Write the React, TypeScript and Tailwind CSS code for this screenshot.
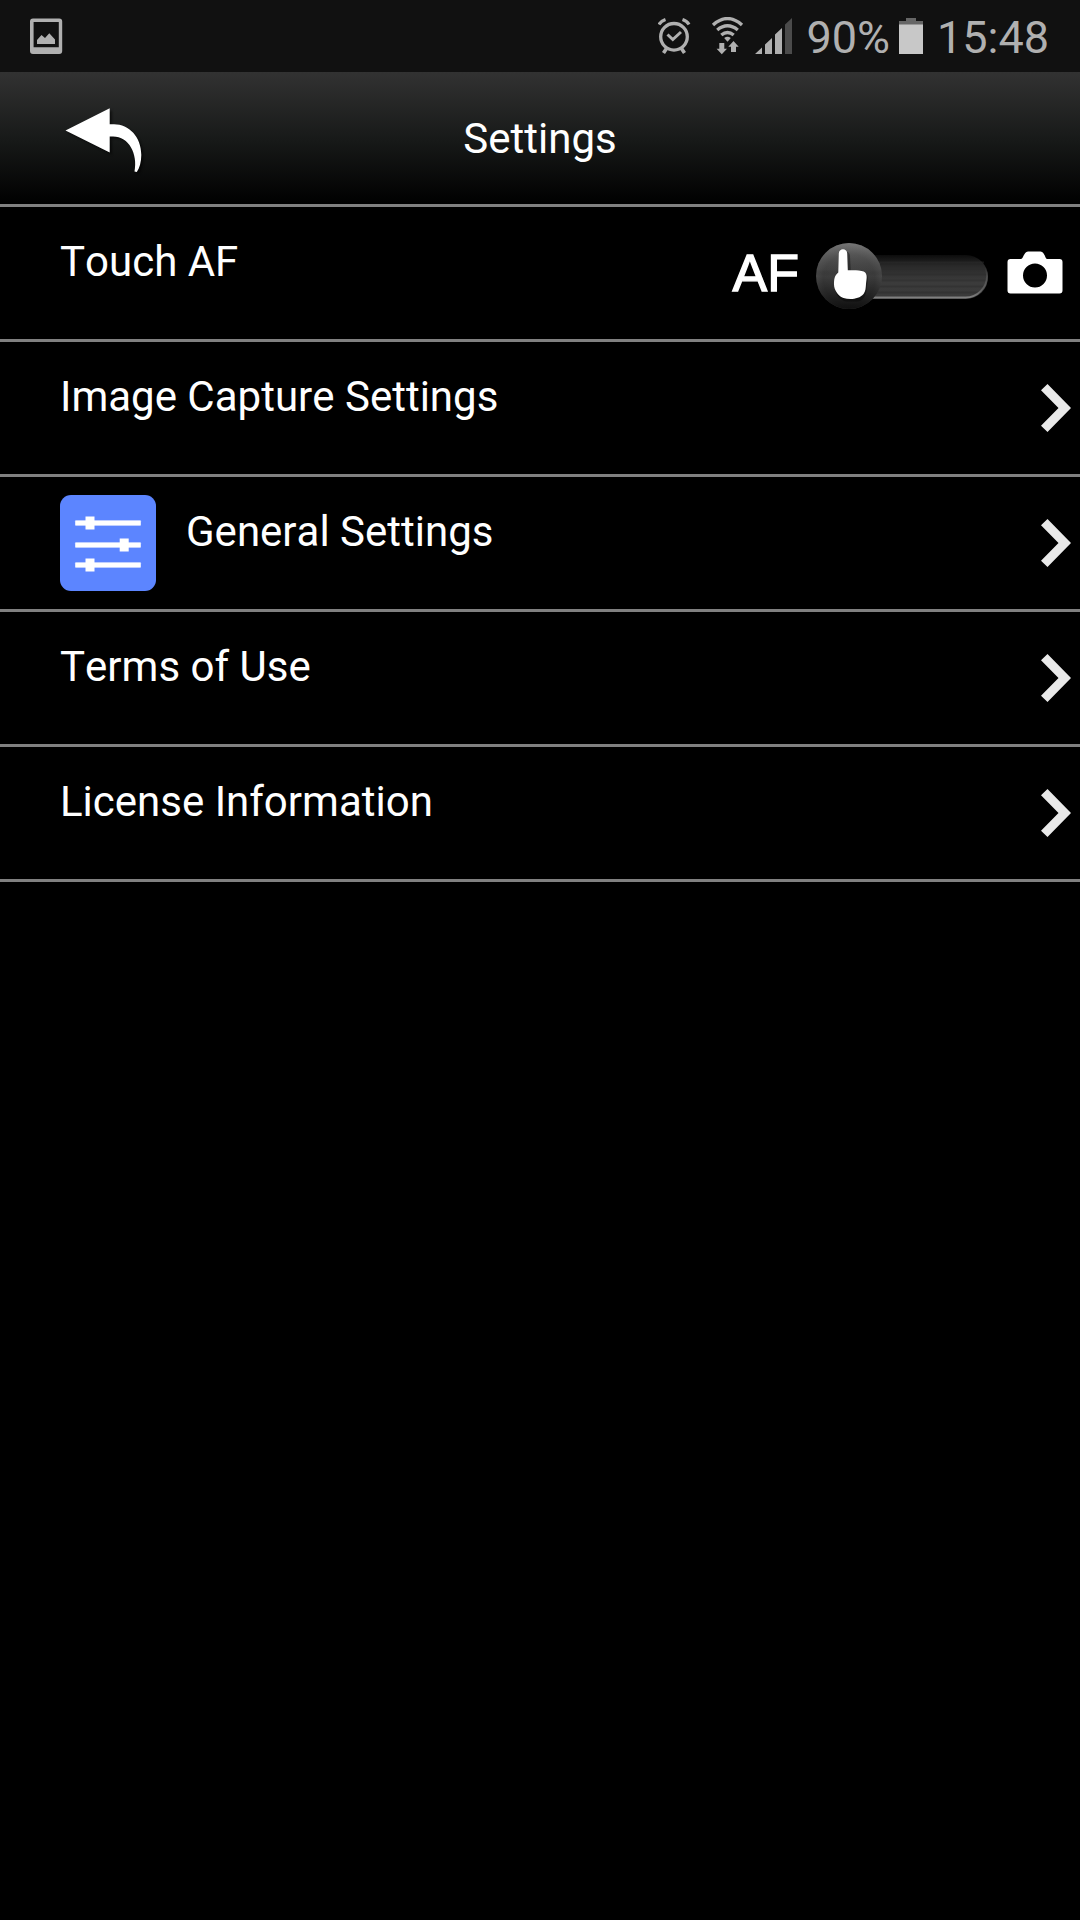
import { useState } from "react";
import type { ReactNode } from "react";

function PictureIcon() {
  return (
    <svg width="33" height="36" viewBox="30 18 33 36" className="block">
      <path
        fill="#b0b0b0"
        fillRule="evenodd"
        d="M33 18.400h26.200a3 3 0 0 1 3 3V51a3 3 0 0 1-3 3H33a3 3 0 0 1-3-3V21.400a3 3 0 0 1 3-3zM33.600 22v25.300h25.200V22z"
      />
      <path fill="#b0b0b0" d="M37 44v-4l4.500-5 3.500 3 4.300-4.800L55 39.500V44z" />
    </svg>
  );
}

function AlarmIcon() {
  return (
    <svg width="33" height="37" viewBox="658 18 33 37" className="block" fill="none" stroke="#b0b0b0">
      <circle cx="674" cy="36.800" r="13.300" strokeWidth="3.300" />
      <path strokeWidth="3" d="M667.500 34.500l5.300 5 8.200-7.500" />
      <path strokeWidth="3.200" d="M659 24.500q2-3.500 6.500-5M689 24.500q-2-3.500-6.500-5" />
      <path strokeWidth="3.600" d="M666.500 48.500l-3 4.500M681.500 48.500l3 4.500" />
    </svg>
  );
}

function WifiIcon() {
  return (
    <svg width="33" height="38" viewBox="711 17 33 38" className="block">
      <g fill="none" stroke="#b0b0b0" strokeWidth="3.400">
        <path d="M713 25q14.500-12.800 29 0" />
        <path d="M717.200 30q10.300-8.400 20.600 0" />
        <path d="M721.300 35q6.200-5 12.400 0" />
      </g>
      <path fill="#b0b0b0" d="M724.200 38q3.300-2.400 6.600 0l-3.300 3.700z" />
      <path fill="#b0b0b0" d="M719.300 43h5v5.700h2.700l-5.200 5.600-5.200-5.600h2.700z" />
      <path fill="#b0b0b0" d="M731 52h5v-5.300h2.700l-5.200-5.700-5.200 5.700h2.700z" />
    </svg>
  );
}

function SignalIcon() {
  return (
    <svg width="38" height="36" viewBox="755 18 38 36" className="block">
      <path fill="#b0b0b0" d="M755 54l7-6.500V54zM765 54v-9.500l7-6.500v16zM775 54V34.500l7-6.500v26z" />
      <path fill="#4b4b4b" d="M785 54V24.500l7-6.500v36z" />
    </svg>
  );
}

function BatteryIcon() {
  return (
    <svg width="24" height="36" viewBox="0 0 24 36" className="block">
      <path fill="#666666" d="M7 0h10v3h7v4H0V3h7z" />
      <path fill="#c8c8c8" d="M0 6.500h24V36H0z" />
    </svg>
  );
}

function BackIcon() {
  return (
    <svg width="80" height="70" viewBox="64 104 80 70" className="block drop-shadow-[2px_2px_1px_rgba(0,0,0,0.6)]">
      <path
        fill="#ffffff"
        d="M65.500 129.500L109.700 107.300V123.300H114C129 123.300 141.300 136 141.300 154C141.300 161 139.500 167 136.800 171L134.500 170.500C138 153 129 135.500 113 135.500H109.700V151.500Z"
      />
    </svg>
  );
}

function ChevronIcon() {
  return (
    <svg width="30" height="48" viewBox="0 0 30 48" className="block">
      <path fill="#e9e9e9" d="M6.500 0L30 24 6.500 48 0 41.700 17.500 24 0 6.300z" />
    </svg>
  );
}

function SlidersIcon() {
  return (
    <svg width="96" height="96" viewBox="60 495 96 96" className="block">
      <rect x="60" y="495" width="96" height="96" rx="11" fill="#5c85ff" />
      <g fill="#dfe7ff">
        <rect x="75" y="520.200" width="66" height="5.600" rx="1" />
        <rect x="75" y="542.200" width="66" height="5.600" rx="1" />
        <rect x="75" y="562.200" width="66" height="5.600" rx="1" />
      </g>
      <g fill="#ffffff">
        <rect x="76" y="521" width="64" height="4" />
        <rect x="76" y="543" width="64" height="4" />
        <rect x="76" y="563" width="64" height="4" />
        <rect x="85.500" y="516.500" width="9" height="13" />
        <rect x="119.700" y="538.500" width="9" height="13" />
        <rect x="85.500" y="558.500" width="9" height="13" />
      </g>
    </svg>
  );
}

function CameraIcon() {
  return (
    <svg width="56" height="43" viewBox="1007 251.500 56 43" className="block">
      <path
        fill="#ffffff"
        fillRule="evenodd"
        d="M1010.500 259.500h10.500c2.500-.5 3-7.500 7-7.500h12.500c4 0 4.500 7 6.500 7.500h12.500a3 3 0 0 1 3 3V291a3 3 0 0 1-3 3h-49a3 3 0 0 1-3-3v-28.500a3 3 0 0 1 3-3zM1035 264a12 12 0 1 0 0 24 12 12 0 0 0 0-24z"
      />
    </svg>
  );
}

// Track with the round knob on the left (touch) or on the right (shutter)
function FocusSwitch() {
  const [shutter, setShutter] = useState(false);
  return (
    <button
      type="button"
      role="switch"
      aria-checked={shutter}
      aria-label="Touch AF"
      className="mt-[35px]"
      onClick={() => setShutter(!shutter)}
    >
      <svg width="173" height="68" viewBox="816 242 173 68" className="block">
        <defs>
          <linearGradient id="track" x1="0" y1="0" x2="0" y2="1">
            <stop offset="0" stopColor="#0c0c0c" />
            <stop offset="0.250" stopColor="#292929" />
            <stop offset="0.600" stopColor="#3b3b3b" />
            <stop offset="1" stopColor="#3a3a3a" />
          </linearGradient>
          <linearGradient id="rim" x1="0" y1="0" x2="0" y2="1">
            <stop offset="0.300" stopColor="#707070" stopOpacity="0" />
            <stop offset="0.800" stopColor="#5c5c5c" />
            <stop offset="1" stopColor="#808080" />
          </linearGradient>
          <radialGradient id="knob" cx="0.500" cy="0.550" r="0.520">
            <stop offset="0" stopColor="#404040" />
            <stop offset="0.750" stopColor="#3c3c3c" />
            <stop offset="1" stopColor="#4a4a4a" />
          </radialGradient>
          <linearGradient id="shade" x1="0" y1="0" x2="0" y2="1">
            <stop offset="0" stopColor="#999999" stopOpacity="0.550" />
            <stop offset="0.400" stopColor="#555555" stopOpacity="0.200" />
            <stop offset="0.500" stopColor="#000000" stopOpacity="0" />
            <stop offset="1" stopColor="#000000" stopOpacity="0.750" />
          </linearGradient>
        </defs>
        <rect x="826" y="255" width="162" height="44" rx="22" fill="url(#track)" />
        <path
          d="M828 262.500h156M828 268.500h158M828 274.500h159M828 280.500h158M828 286.500h156M828 292.500h152"
          stroke="#2b2b2b"
          strokeOpacity="0.500"
          strokeWidth="2"
        />
        <rect x="826" y="254.500" width="161" height="43" rx="21.500" fill="none" stroke="url(#rim)" strokeWidth="1.800" />
        <g transform={shutter ? "translate(106 0)" : undefined}>
          <circle cx="849" cy="276" r="33" fill="url(#knob)" />
          <circle cx="849" cy="276" r="33" fill="url(#shade)" />
          <path
            d="M841 256a4 4 0 0 1 9 0l.8 16c5 0 10-1.500 15 1.500 4 3 1.500 8 1.200 13-.5 9-4 15-10 15h-10c-6 0-12-7-12-13 0-6 .5-11 5-14z"
            fill="#000000"
            fillOpacity="0.350"
          />
          <path
            d="M838.800 253.500a4.200 4.200 0 0 1 8.400 0l.6 16.800c4.800-.3 12.200-.3 15.900 1.200 4.300 2.200 2.800 6.500 2.300 12.500-.3 4-.3 7-2.500 10-4.500 5.500-14 5.800-20 4-4.500-1.400-9.500-7.500-9.500-13.500 0-5 .4-9 4.300-12z"
            fill="#ffffff"
          />
        </g>
      </svg>
    </button>
  );
}

function SettingsRow({ label, icon, children }: { label: string; icon?: ReactNode; children: ReactNode }) {
  return (
    <li className="flex h-[135px] items-center justify-between border-b-[3px] border-[#808080] pl-[60px]">
      <div className="flex h-full items-center gap-[30px]">
        {icon}
        <span className="self-start pt-[30px] text-[42px] leading-[49px] whitespace-nowrap">{label}</span>
      </div>
      {children}
    </li>
  );
}

const LINKS = [
  { label: "Image Capture Settings" },
  { label: "General Settings", icon: <SlidersIcon /> },
  { label: "Terms of Use" },
  { label: "License Information" },
];

export default function App() {
  return (
    <div className="min-h-screen w-full bg-black font-[Roboto,sans-serif] text-white [font-kerning:none]">
      <div className="flex h-[72px] items-center justify-between bg-[#111111] pr-[31px] pl-[30px] text-[45px] leading-[68px] text-[#b0b0b0]">
        <PictureIcon />
        <div className="flex items-center">
          <AlarmIcon />
          <span className="ml-5">
            <WifiIcon />
          </span>
          <span className="ml-[11px]">
            <SignalIcon />
          </span>
          <span className="ml-[13px] pt-[4px]">90%</span>
          <span className="ml-[9px]">
            <BatteryIcon />
          </span>
          <span className="ml-[14px] pt-[4px]">15:48</span>
        </div>
      </div>

      <header className="grid h-[135px] grid-cols-[1fr_auto_1fr] items-start border-b-[3px] border-[#808080] bg-[linear-gradient(to_bottom,#323232,#171918_52%,#000000)]">
        <button type="button" aria-label="Back" className="pt-[33px] pl-16">
          <BackIcon />
        </button>
        <h1 className="pt-[42px] text-[42px] leading-[49px]">Settings</h1>
      </header>

      <ul>
        <SettingsRow label="Touch AF">
          <div className="flex items-start self-start pr-[17px]">
            <span className="mt-[40px] mr-[17px] font-['Liberation_Sans',sans-serif] text-[52px] leading-[52px] [-webkit-text-stroke:1.3px_white]">
              AF
            </span>
            <FocusSwitch />
            <span className="mt-[44px] ml-[18px]">
              <CameraIcon />
            </span>
          </div>
        </SettingsRow>
        {LINKS.map((link) => (
          <SettingsRow key={link.label} label={link.label} icon={link.icon}>
            <span className="pr-[9px]">
              <ChevronIcon />
            </span>
          </SettingsRow>
        ))}
      </ul>
    </div>
  );
}
